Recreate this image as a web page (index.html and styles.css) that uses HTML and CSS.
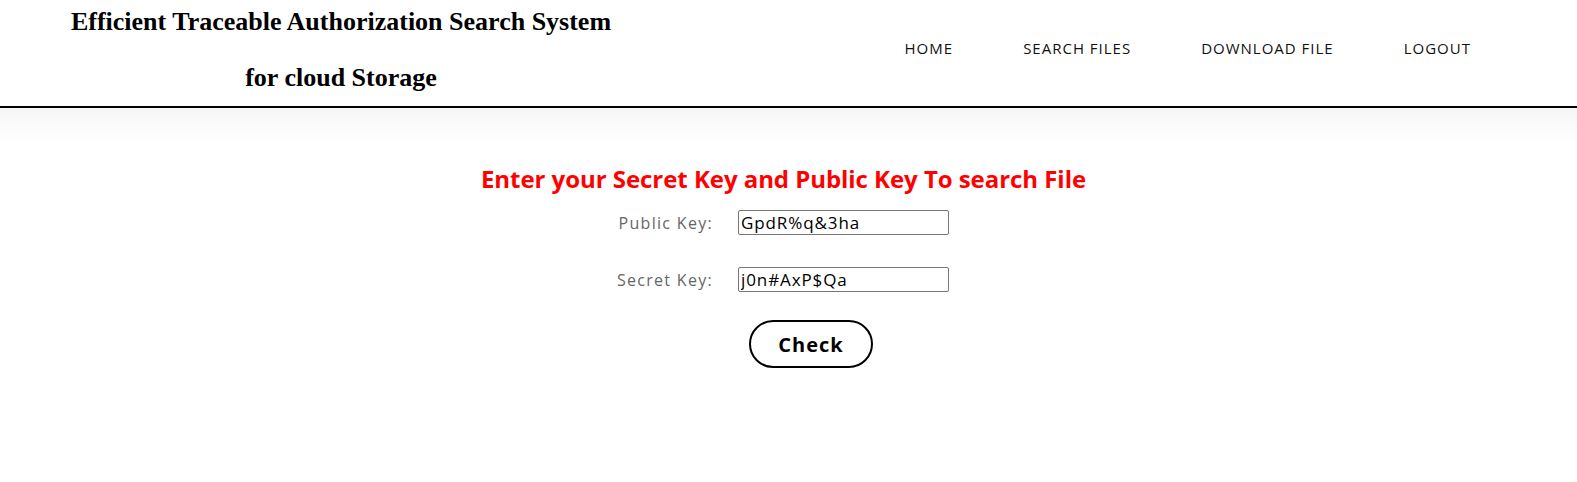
FILE: index.html
```html
<!DOCTYPE html>
<html>
<head>
<meta charset="utf-8">
<link rel="stylesheet" href="styles.css">
</head>
<body>
<header class="topbar">
  <div class="brand">
    <span class="brand-line">Efficient Traceable Authorization Search System</span>
    <span class="brand-line">for cloud Storage</span>
  </div>
  <nav class="nav">
    <a class="nav-link" href="#">HOME</a>
    <a class="nav-link" href="#">SEARCH FILES</a>
    <a class="nav-link" href="#">DOWNLOAD FILE</a>
    <a class="nav-link" href="#">LOGOUT</a>
  </nav>
</header>
<main class="content">
  <h2 class="form-title">Enter your Secret Key and Public Key To search File</h2>
  <form class="key-form">
    <div class="field">
      <label class="field-label">Public Key:</label>
      <input class="field-input" type="text" value="GpdR%q&amp;3ha">
    </div>
    <div class="field">
      <label class="field-label">Secret Key:</label>
      <input class="field-input" type="text" value="j0n#AxP$Qa">
    </div>
    <div class="actions">
      <button class="check-btn" type="button">Check</button>
    </div>
  </form>
</main>
</body>
</html>
```
FILE: styles.css
```css
* { box-sizing: border-box; }
html, body { margin: 0; padding: 0; background: #fff; }
body { font-family: "Open Sans", "Liberation Sans", sans-serif; }

.topbar {
  display: flex;
  align-items: flex-start;
  height: 108px;
  border-bottom: 2px solid #000;
}
.brand {
  width: 682px;
  display: flex;
  flex-direction: column;
  align-items: center;
  gap: 12px;
  font-family: "Liberation Serif", "Times New Roman", serif;
  font-weight: bold;
  font-size: 26px;
  line-height: 44px;
  color: #000;
}
.nav {
  margin-left: auto;
  margin-right: 71px;
  display: flex;
  padding-top: 38px;
}
.nav-link {
  padding: 0 35px;
  font-size: 15px;
  font-weight: 500;
  color: #111;
  text-decoration: none;
  letter-spacing: 1px;
  line-height: 20px;
}

.content {
  background: linear-gradient(#f6f6f6, #fff 34px);
  padding-top: 56px;
  height: 374px;
  display: flex;
  flex-direction: column;
  align-items: center;
}
.form-title {
  margin: 0 10px 16px 0;
  color: #ff0000;
  font-size: 24px;
  font-weight: 700;
  line-height: 30px;
  letter-spacing: -0.05px;
}
.key-form {
  display: flex;
  flex-direction: column;
  align-items: center;
}
.field {
  display: flex;
  align-items: center;
  margin: 0 26px 32px 0;
}
.field-label {
  width: 136px;
  text-align: right;
  padding-right: 25px;
  font-size: 16px;
  letter-spacing: 1.3px;
  color: #666;
}
.field-input {
  width: 211px;
  height: 25px;
  border: 1px solid #767676;
  border-radius: 2px;
  padding: 0 2px;
  font-family: inherit;
  font-size: 17px;
  letter-spacing: 0.9px;
  color: #000;
}
.actions {
  display: flex;
  justify-content: center;
  margin: -4px 0 0 45px;
}
.check-btn {
  width: 124px;
  height: 48px;
  border: 2px solid #000;
  border-radius: 24px;
  background: #fff;
  font-family: inherit;
  font-size: 20px;
  font-weight: 700;
  letter-spacing: 1px;
  color: #000;
}
```
